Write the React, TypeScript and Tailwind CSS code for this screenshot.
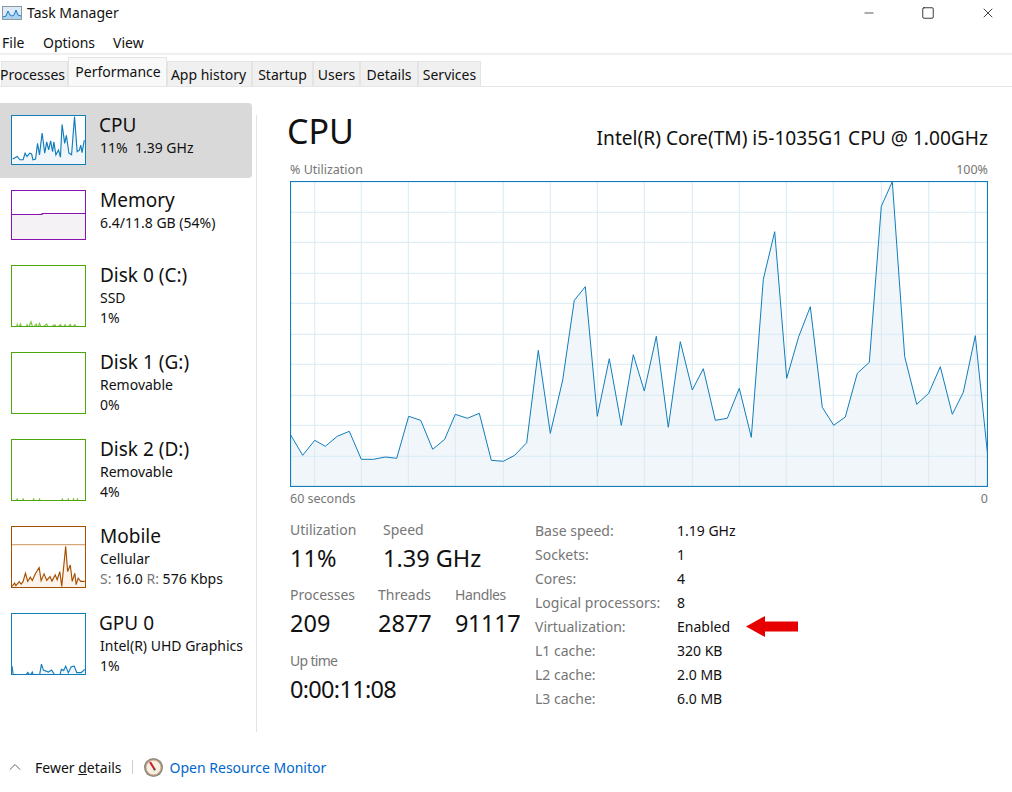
import { ChevronUp, Minus, Square, X } from "lucide-react";

type Thumb = {
  name: string;
  lines: React.ReactNode[];
  border: string;
  height: string;
  viewBox: string;
  fill: string;
  stroke: string;
  points: string;
  bottom: number;
  selected?: boolean;
  extra?: React.ReactNode;
};

const vLines = [314.7, 361.3, 408.3, 455.3, 503.3, 550.3, 597.3, 644.3, 692.3, 739.3, 786.3, 833.3, 881.3, 928.7, 975.3];
const hLines = [212.3, 242.3, 273.3, 303.3, 334.3, 364.3, 395.3, 425.3, 456.3];

// traced from the graph, absolute page pixels
const left = [[32,825],[68,886],[104,841],[136,859],[172,829],[208,814],[244,898],[280,898],[316,891],[350,895],[386,769],[422,781],[458,868],[494,838],[526,763],[562,775],[598,760],[634,901],[670,904],[704,886],[740,848],[775,571],[811,820],[848,660],[883,421],[916,380],[952,769],[988,596],[1024,796],[1060,584]];
const right = [[13,693],[49,529],[85,802],[121,545],[157,690],[190,626],[226,781],[262,775],[298,685],[334,832],[370,358],[404,215],[440,655],[476,530],[511,440],[547,742],[581,796],[616,771],[652,640],[688,607],[724,139],[757,65],[794,590],[830,733],[866,700],[901,620],[937,763],[970,697],[1006,527],[1042,875]];
const cpuPoints = [
  ...left.map(([x, y]) => [280 + x / 3, 160 + y / 3]),
  ...right.map(([x, y]) => [640 + x / 3, 160 + y / 3]),
]
  .map((p) => p.map((n) => n.toFixed(1)).join(","))
  .join(" ");

const devices: Thumb[] = [
  {
    name: "CPU",
    lines: ["11%  1.39 GHz"],
    border: "border-[#117dbb]",
    height: "h-[50px]",
    viewBox: "34 46 223 147",
    fill: "#f1f6fa",
    stroke: "#117dbb",
    bottom: 193,
    selected: true,
    points: "36,178 50,170 58,180 68,180 74,160 80,170 88,160 94,162 98,180 106,178 112,130 118,165 126,98 134,160 140,125 146,150 152,122 158,155 162,125 168,165 176,150 182,172 187,72 195,130 200,105 208,160 216,165 225,48 233,155 240,150 244,135 248,158 255,120",
  },
  {
    name: "Memory",
    lines: ["6.4/11.8 GB (54%)"],
    border: "border-[#8b12ae]",
    height: "h-[50px]",
    viewBox: "34 271 223 147",
    fill: "#f4f2f4",
    stroke: "#8b12ae",
    bottom: 418,
    points: "34,343 126,343 126,340 257,340",
  },
  {
    name: "Disk 0 (C:)",
    lines: ["SSD", "1%"],
    border: "border-[#4da60c]",
    height: "h-[62px]",
    viewBox: "34 496 223 184",
    fill: "#f2f8ed",
    stroke: "#7fc24a",
    bottom: 680,
    points: "34,686 48,686 50,675 54,686 60,674 64,686 76,686 80,676 84,686 92,667 98,686 108,674 112,686 118,672 124,686 140,674 146,686 165,676 170,686 182,676 188,686 196,676 202,686 212,675 218,686 226,676 232,686 257,686",
  },
  {
    name: "Disk 1 (G:)",
    lines: ["Removable", "0%"],
    border: "border-[#4da60c]",
    height: "h-[62px]",
    viewBox: "34 496 223 184",
    fill: "#f2f8ed",
    stroke: "#4da60c",
    bottom: 680,
    points: "34,690 257,690",
  },
  {
    name: "Disk 2 (D:)",
    lines: ["Removable", "4%"],
    border: "border-[#4da60c]",
    height: "h-[62px]",
    viewBox: "34 496 223 184",
    fill: "#f2f8ed",
    stroke: "#7fc24a",
    bottom: 680,
    points: "34,686 48,686 50,675 52,686 66,686 68,675 70,686 98,686 100,675 102,686 116,686 118,675 120,686 186,686 188,675 190,686 204,686 206,675 208,686 220,686 222,675 224,686 232,686 234,675 236,686 257,686",
  },
  {
    name: "Mobile",
    lines: [
      "Cellular",
      <>
        <span className="text-[#767676]">S:</span> 16.0 <span className="text-[#767676]">R:</span> 576 Kbps
      </>,
    ],
    border: "border-[#a74f01]",
    height: "h-[62px]",
    viewBox: "34 19 223 183",
    fill: "#fcf3eb",
    stroke: "#a74f01",
    bottom: 202,
    points: "34,200 42,190 46,198 56,186 62,193 68,185 75,160 82,185 90,172 96,182 106,160 117,143 123,183 132,162 140,182 150,170 156,184 166,165 172,180 180,155 186,200 198,78 204,155 212,135 218,185 226,160 230,195 236,175 244,185 256,185",
    extra: <line x1="34" y1="73" x2="257" y2="73" stroke="#d9a77a" strokeWidth="4" />,
  },
  {
    name: "GPU 0",
    lines: ["Intel(R) UHD Graphics", "1%"],
    border: "border-[#117dbb]",
    height: "h-[62px]",
    viewBox: "34 281 223 183",
    fill: "#f1f6fa",
    stroke: "#117dbb",
    bottom: 464,
    points: "34,440 38,468 76,468 82,459 90,468 96,458 100,468 118,468 124,434 130,452 145,458 155,452 165,468 180,468 185,450 192,453 198,440 206,460 215,442 224,440 232,460 245,460 256,450",
  },
];

const tabs = [
  { label: "Processes", width: "w-[67px]", text: "-ml-[4px]" },
  { label: "Performance", width: "w-[99px]", text: "ml-[1px] mt-[2px]", active: true },
  { label: "App history", width: "w-[85px]", text: "-ml-[2px]" },
  { label: "Startup", width: "w-[61px]" },
  { label: "Users", width: "w-[47px]" },
  { label: "Details", width: "w-[58px]" },
  { label: "Services", width: "w-[63px]" },
];

const specs = [
  ["Base speed:", "1.19 GHz"],
  ["Sockets:", "1"],
  ["Cores:", "4"],
  ["Logical processors:", "8"],
  ["Virtualization:", "Enabled"],
  ["L1 cache:", "320 KB"],
  ["L2 cache:", "2.0 MB"],
  ["L3 cache:", "6.0 MB"],
];

const Stat = ({ label, value, className }: { label: string; value: string; className: string }) => (
  <div className={className}>
    <p className="h-[22px] text-[14px] leading-[22px] text-[#767676]">{label}</p>
    <p className="h-[44px] whitespace-nowrap text-[23.5px] leading-[34px] text-[#111]">{value}</p>
  </div>
);

const DeviceRow = ({ device }: { device: Thumb }) => (
  <div
    className={`flex w-[252px] gap-[14px] rounded-r-sm pl-[11px] pt-3 ${device.selected ? "bg-[#d9d9d9]" : ""} ${
      device.lines.length > 1 ? "h-[87px]" : "h-[75px]"
    }`}
  >
    <div className={`w-[75px] shrink-0 border bg-white ${device.border} ${device.height}`}>
      <svg viewBox={device.viewBox} preserveAspectRatio="none" className="block h-full w-full">
        {device.extra}
        <polygon
          points={`${device.points.split(" ")[0].split(",")[0]},${device.bottom} ${device.points} 257,${device.bottom}`}
          fill={device.fill}
        />
        <polyline points={device.points} fill="none" stroke={device.stroke} strokeWidth="3.5" />
      </svg>
    </div>
    <div className="-mt-[2px] whitespace-pre text-[#111]">
      <p className={`h-[24px] text-[19px] leading-[24px] ${device.name === "CPU" || device.name === "GPU 0" ? "-ml-[1px]" : ""}`}>
        {device.name}
      </p>
      {device.lines.map((line, i) => (
        <p key={i} className={`h-[21px] text-[14px] leading-[21px] ${i === 1 ? "-mt-[1px]" : ""}`}>
          {line}
        </p>
      ))}
    </div>
  </div>
);

export default function App() {
  return (
    <div
      className="flex h-[792px] w-[1012px] flex-col overflow-hidden bg-white text-[#111]"
      style={{ fontFamily: '"Noto Sans", sans-serif' }}
    >
      {/* title bar */}
      <div className="flex h-[27px] shrink-0 items-center pb-[2px]">
        <svg width="20" height="14" viewBox="0 0 20 14" className="ml-[2px]">
          <rect x="0.5" y="0.5" width="19" height="13" fill="#dcebf7" stroke="#8d9aa6" />
          <path d="M1 11 L4 10 L6 5 L8 9 L10 10 L12 9 L14 4 L16 9 L19 10 L19 13 L1 13Z" fill="#a9d2f0" />
          <path d="M1 11 L4 10 L6 5 L8 9 L10 10 L12 9 L14 4 L16 9 L19 10" fill="none" stroke="#1b7cc4" />
        </svg>
        <span className="ml-[5px] text-[14px]">Task Manager</span>
        <div className="ml-auto flex items-center">
          <Minus className="mr-[45px] h-[14px] w-[14px]" strokeWidth={1.2} />
          <Square className="mr-[45px] h-[14px] w-[14px]" strokeWidth={1.4} />
          <X className="mr-[16px] h-[16px] w-[16px]" strokeWidth={1.2} />
        </div>
      </div>

      {/* menu */}
      <div className="flex h-[28px] shrink-0 items-center border-b-2 border-[#f0f0f0] pb-[2px] pl-[2px] pt-[6px] text-[14px]">
        <span className="w-[41px]">File</span>
        <span className="w-[70px]">Options</span>
        <span>View</span>
      </div>

      {/* tabs */}
      <div className="flex h-[32px] shrink-0 items-end border-b border-[#e6e6e6] pl-[1px] text-[14px]">
        {tabs.map((t) => (
          <div
            key={t.label}
            className={`flex items-center justify-center border border-b-0 border-[#e4e4e4] whitespace-nowrap ${t.width} ${
              t.active ? "h-[29px] bg-[#f9f9f9] pb-[3px]" : "h-[25px] bg-[#f0f0f0]"
            }`}
          >
            <span className={t.text}>{t.label}</span>
          </div>
        ))}
      </div>

      {/* body */}
      <div className="flex min-h-0 flex-1 pt-[16px]">
        <div className="w-[256px] shrink-0">
          {devices.map((d) => (
            <DeviceRow key={d.name} device={d} />
          ))}
        </div>

        <div className="mt-[12px] h-[617px] w-px shrink-0 bg-[#e3e3e3]" />

        <div className="ml-[33px] w-[698px] shrink-0">
          <div className="-ml-[3px] flex h-[58px] items-center justify-between pb-[2px]">
            <span className="text-[34px] leading-none">CPU</span>
            <span className="mt-[14px] text-[19.15px]">Intel(R) Core(TM) i5-1035G1 CPU @ 1.00GHz</span>
          </div>
          <div className="flex h-[20px] items-center justify-between pb-[2px] text-[12.5px] text-[#767676]">
            <span>% Utilization</span>
            <span>100%</span>
          </div>

          <svg viewBox="290 181 698 306" className="block h-[306px] w-[698px]">
            <rect x="290.5" y="181.5" width="697" height="305" fill="#fff" />
            <polygon points={`290.7,486 ${cpuPoints} 987,486`} fill="#f1f6fa" />
            {vLines.map((x) => (
              <line key={x} x1={x} x2={x} y1="181" y2="487" stroke="#d9eaf4" strokeWidth="1" />
            ))}
            {hLines.map((y) => (
              <line key={y} x1="290" x2="988" y1={y} y2={y} stroke="#d9eaf4" strokeWidth="1" />
            ))}
            <polyline points={cpuPoints} fill="none" stroke="#117dbb" strokeWidth="1" />
            <rect x="290.5" y="181.5" width="697" height="305" fill="none" stroke="#117dbb" strokeWidth="1.2" />
          </svg>

          <div className="flex h-[24px] items-center justify-between text-[12.5px] text-[#767676]">
            <span>60 seconds</span>
            <span>0</span>
          </div>

          <div className="mt-[8px] flex">
            <div className="w-[245px] shrink-0">
              <div className="flex h-[65px]">
                <Stat label="Utilization" value="11%" className="w-[93px]" />
                <Stat label="Speed" value="1.39 GHz" className="" />
              </div>
              <div className="flex h-[66px]">
                <Stat label="Processes" value="209" className="w-[88px]" />
                <Stat label="Threads" value="2877" className="w-[77px]" />
                <Stat label="Handles" value="91117" className="tracking-[-0.4px]" />
              </div>
              <Stat label="Up time" value="0:00:11:08" className="tracking-[-0.7px]" />
            </div>
            <div className="-mt-[1px] grid auto-rows-[24px] grid-cols-[142px_auto] items-center text-[14px]">
              {specs.map(([k, v]) => (
                <div key={k} className="contents">
                  <span className="whitespace-nowrap text-[#767676]">{k}</span>
                  <span className="flex items-center">
                    {v}
                    {v === "Enabled" && (
                      <svg width="53" height="21" viewBox="0 0 53 21" className="ml-[16px]">
                        <polygon points="0,10.5 19,0 19,5.5 52,5.5 52,15.5 19,15.5 19,21" fill="#e60000" />
                      </svg>
                    )}
                  </span>
                </div>
              ))}
            </div>
          </div>
        </div>
      </div>

      {/* footer */}
      <div className="flex h-[60px] shrink-0 items-center pt-[10px] text-[14px]">
        <ChevronUp className="ml-[5px] h-[20px] w-[20px] text-[#555]" strokeWidth={1.1} />
        <span className="ml-[10px]">
          Fewer <span className="underline">d</span>etails
        </span>
        <div className="ml-[10px] h-[14px] w-px bg-[#cfcfcf]" />
        <svg width="21" height="21" viewBox="0 0 21 21" className="ml-[10px]">
          <circle cx="10.5" cy="10.5" r="9.5" fill="#8e8a84" />
          <circle cx="10.5" cy="10.5" r="7.5" fill="#f6efe4" stroke="#d9a878" strokeWidth="1" />
          <line x1="7" y1="5" x2="12" y2="13" stroke="#cc1f1f" strokeWidth="2" />
          <circle cx="11.5" cy="12.5" r="1" fill="#555" />
        </svg>
        <span className="ml-[6px] text-[#0066cc]">Open Resource Monitor</span>
      </div>
    </div>
  );
}
